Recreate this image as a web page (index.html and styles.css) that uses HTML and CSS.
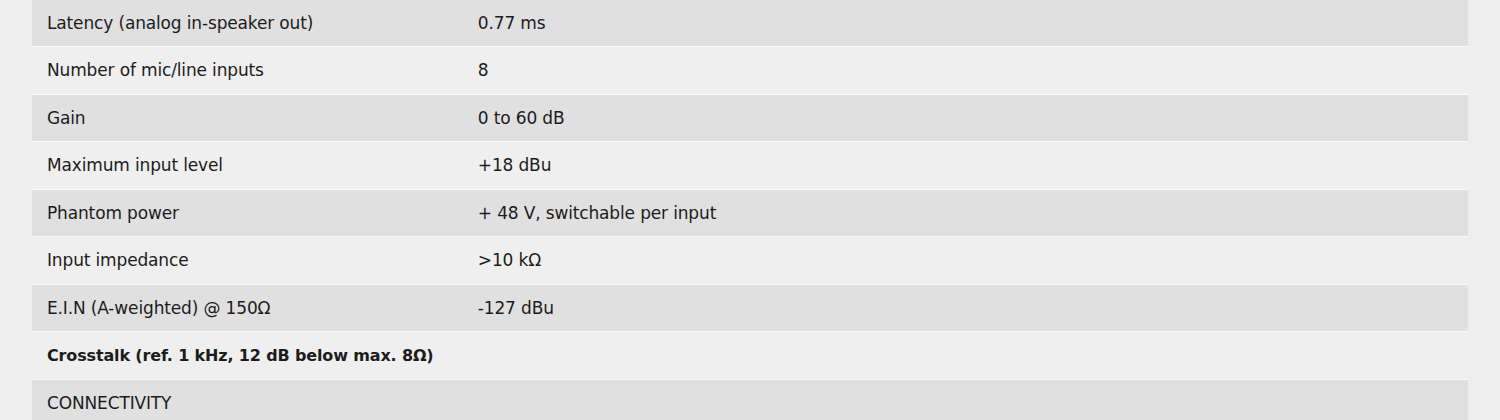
FILE: index.html
```html
<!DOCTYPE html>
<html lang="en">
<head>
<meta charset="utf-8">
<title>Specifications</title>
<link rel="stylesheet" href="styles.css">
</head>
<body>
<div class="page">
  <table class="specs">
    <colgroup><col class="col-label"><col class="col-value"></colgroup>
    <tbody>
      <tr class="row dark"><td class="label">Latency (analog in-speaker out)</td><td class="value">0.77 ms</td></tr>
      <tr class="row light"><td class="label">Number of mic/line inputs</td><td class="value">8</td></tr>
      <tr class="row dark"><td class="label">Gain</td><td class="value">0 to 60 dB</td></tr>
      <tr class="row light"><td class="label">Maximum input level</td><td class="value">+18 dBu</td></tr>
      <tr class="row dark"><td class="label">Phantom power</td><td class="value">+ 48 V, switchable per input</td></tr>
      <tr class="row light"><td class="label">Input impedance</td><td class="value">&gt;10 kΩ</td></tr>
      <tr class="row dark"><td class="label">E.I.N (A-weighted) @ 150Ω</td><td class="value">-127 dBu</td></tr>
      <tr class="row light"><td class="label strong" colspan="2">Crosstalk (ref. 1 kHz, 12 dB below max. 8Ω)</td></tr>
      <tr class="row dark"><td class="label" colspan="2">CONNECTIVITY</td></tr>
    </tbody>
  </table>
</div>
</body>
</html>
```

FILE: styles.css
```css
html, body {
  margin: 0;
  padding: 0;
  background: #eeeeee;
}
body {
  font-family: "DejaVu Sans", "Liberation Sans", sans-serif;
  font-size: 17px;
  color: #1c1c1c;
  overflow: hidden;
}
.page {
  padding: 0 32px;
  margin-top: -0.5px;
}
.specs {
  width: 100%;
  border-collapse: collapse;
  table-layout: fixed;
}
.col-label { width: 30%; }
.row td {
  padding: 12px 15px 11.5px;
  line-height: 23px;
  border-bottom: 1px solid #f9f9f9;
  vertical-align: middle;
  letter-spacing: -0.15px;
}
.row.dark td { background: #e0e0e0; }
.row.light td { background: #efefef; }
.strong {
  font-weight: bold;
  font-size: 16px;
  letter-spacing: -0.35px;
}
```
